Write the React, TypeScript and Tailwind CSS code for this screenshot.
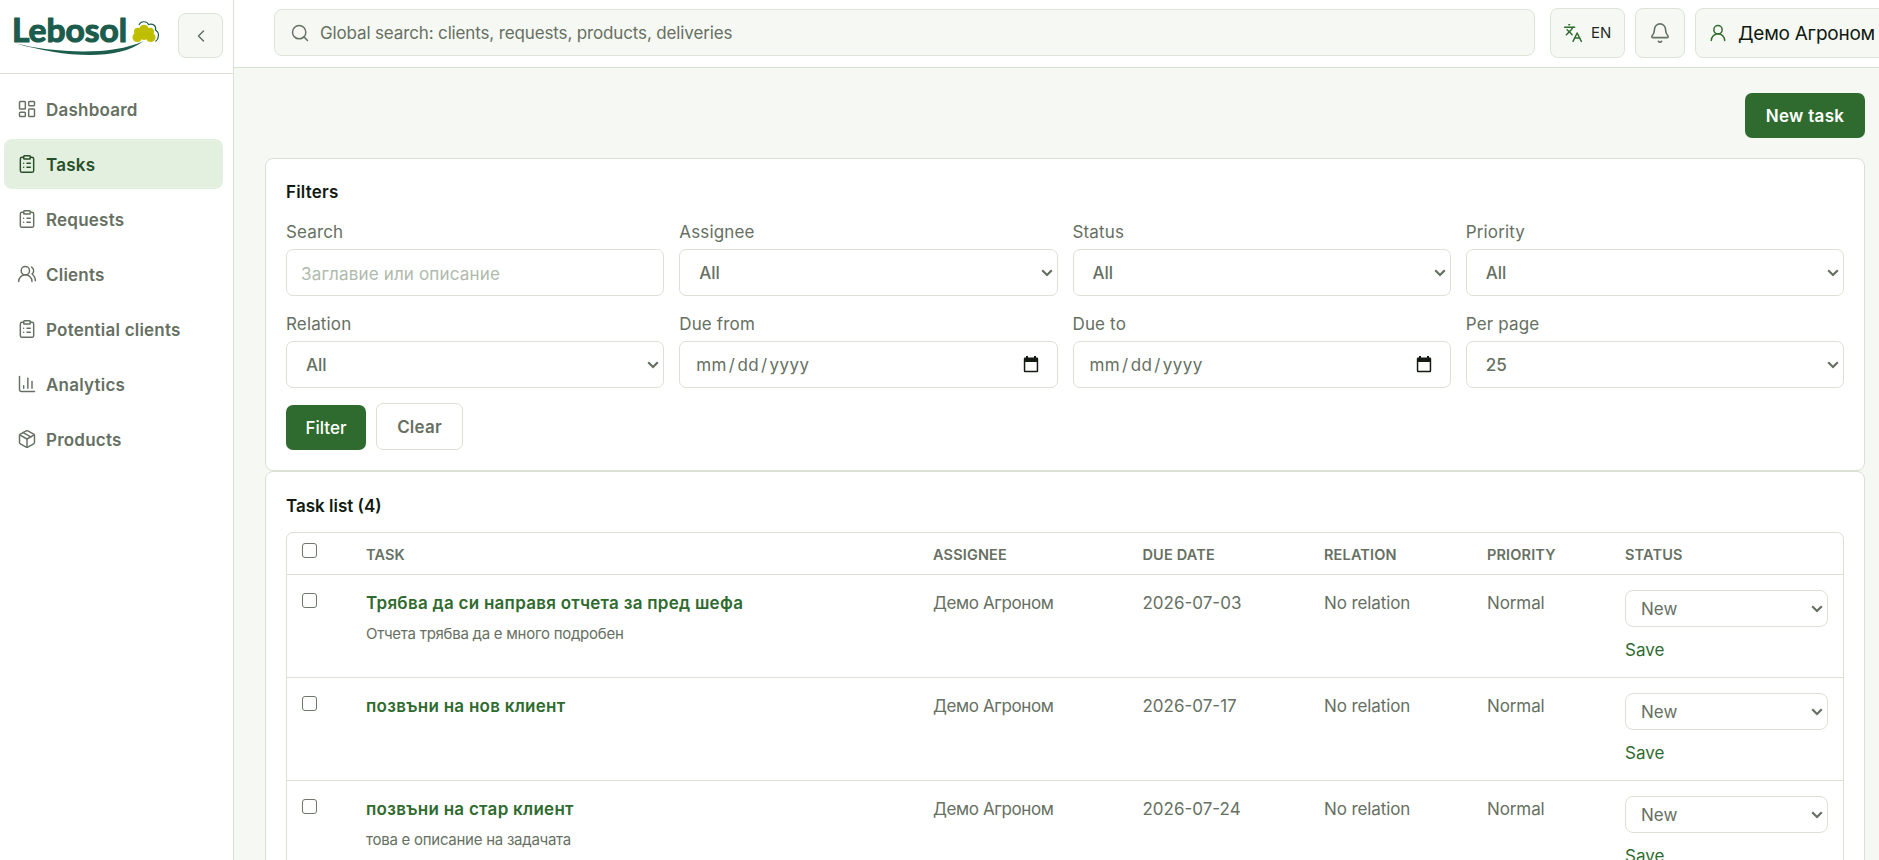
import type { ReactNode } from 'react'
import { useState } from 'react'
import {
  Bell,
  ChartColumn,
  ChevronLeft,
  ClipboardList,
  Languages,
  LayoutDashboard,
  Package,
  Search,
  UserRound,
  UsersRound,
} from 'lucide-react'
import type { LucideIcon } from 'lucide-react'

interface NavItem {
  label: string
  icon: LucideIcon
}

interface Task {
  id: number
  title: string
  description?: string
  assignee: string
  dueDate: string
  relation: string
  priority: string
}

const navItems: NavItem[] = [
  { label: 'Dashboard', icon: LayoutDashboard },
  { label: 'Tasks', icon: ClipboardList },
  { label: 'Requests', icon: ClipboardList },
  { label: 'Clients', icon: UsersRound },
  { label: 'Potential clients', icon: ClipboardList },
  { label: 'Analytics', icon: ChartColumn },
  { label: 'Products', icon: Package },
]

const tasks: Task[] = [
  {
    id: 1,
    title: 'Трябва да си направя отчета за пред шефа',
    description: 'Отчета трябва да е много подробен',
    assignee: 'Демо Агроном',
    dueDate: '2026-07-03',
    relation: 'No relation',
    priority: 'Normal',
  },
  {
    id: 2,
    title: 'позвъни на нов клиент',
    assignee: 'Демо Агроном',
    dueDate: '2026-07-17',
    relation: 'No relation',
    priority: 'Normal',
  },
  {
    id: 3,
    title: 'позвъни на стар клиент',
    description: 'това е описание на задачата',
    assignee: 'Демо Агроном',
    dueDate: '2026-07-24',
    relation: 'No relation',
    priority: 'Normal',
  },
]

function Logo() {
  return (
    <svg width="154" height="58" viewBox="0 -13 154 58" className="shrink-0">
      <text
        x="2"
        y="28.9"
        textLength="115"
        lengthAdjust="spacingAndGlyphs"
        fontSize="33"
        fontWeight="700"
        fill="#1c5c4c"
        stroke="#1c5c4c"
        strokeWidth="1.2"
        strokeLinejoin="round"
        className="font-[Lato,sans-serif]"
      >
        Lebosol
      </text>
      <path d="M6 30.500C40 39 100 44 133.500 28C106 49.500 50 43 6 30.500Z" fill="#1c5c4c" />
      <g fill="#bfbf00">
        <circle cx="134" cy="16.500" r="4.800" />
        <circle cx="127.800" cy="18.500" r="3.800" />
        <circle cx="140.200" cy="18.500" r="3.800" />
        <circle cx="127.300" cy="24.300" r="4.800" />
        <circle cx="140.700" cy="24.300" r="4.800" />
        <circle cx="134" cy="22" r="5" />
      </g>
      <path
        d="M129 12C130.500 8 136.500 7.500 138.500 11.500C142.500 10 146.500 12.500 145.500 17C149.500 19.500 149.500 25 145.500 28.500"
        fill="none"
        stroke="#1c5c4c"
        strokeWidth="1.200"
      />
    </svg>
  )
}

function Chevron() {
  return (
    <svg width="12" height="8" viewBox="0 0 12 8" className="pointer-events-none absolute right-[5px] top-1/2 -translate-y-1/2">
      <path d="M1.2 1.2 6 6 10.8 1.2" fill="none" stroke="#667062" strokeWidth="2.2" />
    </svg>
  )
}

function Field({ label, children }: { label: string; children: ReactNode }) {
  return (
    <div className="min-w-0">
      <label className="mb-[5px] block h-[25px] pt-px leading-[25px] tracking-[0.15px]">{label}</label>
      {children}
    </div>
  )
}

function SelectField({ label, value }: { label: string; value: string }) {
  return (
    <Field label={label}>
      <div className="relative">
        <select className="block h-[47px] w-full appearance-none rounded-[7px] border border-[#dce1d7] bg-white pl-[19px] pt-[2px] font-medium outline-none">
          <option>{value}</option>
        </select>
        <Chevron />
      </div>
    </Field>
  )
}

function DateField({ label }: { label: string }) {
  return (
    <Field label={label}>
      <div className="flex h-[47px] items-center justify-between rounded-[7px] border border-[#dce1d7] bg-white pl-4 pr-[18px]">
        <span className="flex gap-[2px] pt-[2px] tracking-[0.4px]">
          <span>mm</span>
          <span>/</span>
          <span>dd</span>
          <span>/</span>
          <span>yyyy</span>
        </span>
        <svg width="16" height="17" viewBox="0 0 16 17" fill="#141b12">
          <path d="M3 0h2v1.5h6V0h2v1.5h1A1.2 1.2 0 0 1 15.2 2.7V15A1.2 1.2 0 0 1 14 16.2H2A1.2 1.2 0 0 1 .8 15V2.7A1.2 1.2 0 0 1 2 1.5h1zM2.3 6v8.7h11.4V6z" />
        </svg>
      </div>
    </Field>
  )
}

function Checkbox() {
  return (
    <input
      type="checkbox"
      className="block size-[15px] appearance-none rounded-[3px] border border-[#6c7868] bg-white"
    />
  )
}

export default function App() {
  const [active, setActive] = useState('Tasks')

  return (
    <div className="flex h-[860px] w-full overflow-hidden bg-[#f6f8f4] font-[Inter,'Noto_Sans',sans-serif] text-[17px] text-[#667062]">
      <aside className="w-[234px] shrink-0 border-r border-[#dbe1d6] bg-white">
        <div className="flex h-[74px] items-start gap-[14px] border-b border-[#dbe1d6] pl-[10px]">
          <Logo />
          <button className="mt-[13px] flex size-[45px] shrink-0 items-center justify-center rounded-[8px] border border-[#dbe4d6] bg-[#f6f8f4]">
            <ChevronLeft size={20} strokeWidth={1.75} />
          </button>
        </div>
        <nav className="flex flex-col gap-[5px] pl-1 pr-[10px] pt-[10px]">
          {navItems.map(({ label, icon: Icon }) => (
            <button
              key={label}
              onClick={() => setActive(label)}
              className={`flex h-[50px] items-center gap-[9px] rounded-[8px] pl-[13px] font-semibold tracking-[0.22px] ${
                active === label ? 'bg-[#e4f0df] text-[#27502a]' : ''
              }`}
            >
              <Icon size={20} strokeWidth={1.75} />
              <span className="pt-[3px]">{label}</span>
            </button>
          ))}
        </nav>
      </aside>

      <div className="flex min-w-0 flex-1 flex-col overflow-hidden">
        <header className="flex h-[68px] shrink-0 items-start border-b border-[#d8e2d4] bg-white pl-10 pt-2">
          <div className="mt-px flex h-[47px] w-[1261px] shrink-0 items-center gap-[10px] rounded-[8px] border border-[#dbe4d6] bg-[#f6f8f4] pl-[15px]">
            <Search size={20} strokeWidth={1.75} />
            <span className="pt-[3px] tracking-[-0.14px]">Global search: clients, requests, products, deliveries</span>
          </div>
          <button className="ml-[15px] flex h-[50px] w-[75px] shrink-0 items-center gap-2 rounded-[8px] border border-[#dbe4d6] bg-[#f6f8f4] pl-3 text-[15px] text-[#1f2b1e]">
            <Languages size={20} strokeWidth={1.75} className="text-[#2f6b2f]" />
            EN
          </button>
          <button className="ml-[10px] flex size-[50px] shrink-0 items-center justify-center rounded-[8px] border border-[#dbe4d6] bg-[#f6f8f4] pr-px">
            <Bell size={22} strokeWidth={1.75} />
          </button>
          <button className="ml-[10px] flex h-[50px] w-[220px] shrink-0 items-center gap-[10px] rounded-[8px] border border-[#dbe4d6] bg-[#f6f8f4] pl-3 text-[19px] text-[#111a11]">
            <UserRound size={20} strokeWidth={1.75} className="text-[#2f6b2f]" />
            <span className="whitespace-nowrap pt-[2px] tracking-[-0.25px]">Демо Агроном</span>
          </button>
        </header>

        <main className="pl-[31px] pr-[14px] pt-[25px]">
          <div className="mb-5 flex justify-end">
            <button className="h-[45px] w-[120px] rounded-[7px] bg-[#2f6b2f] pt-[2px] font-semibold tracking-[0.3px] text-white">
              New task
            </button>
          </div>

          <section className="h-[313px] rounded-[8px] border border-[#dae1d4] bg-white px-5 pt-5">
            <h2 className="h-[26px] font-semibold leading-[26px] tracking-[0.2px] text-[#111a11]">Filters</h2>
            <div className="mt-[14px] grid grid-cols-4 gap-[15px]">
              <Field label="Search">
                <input
                  placeholder="Заглавие или описание"
                  className="block h-[47px] w-full rounded-[7px] border border-[#dce1d7] bg-white pl-[14px] pt-[2px] tracking-[0.17px] outline-none placeholder:text-[#b0baac]"
                />
              </Field>
              <SelectField label="Assignee" value="All" />
              <SelectField label="Status" value="All" />
              <SelectField label="Priority" value="All" />
              <SelectField label="Relation" value="All" />
              <DateField label="Due from" />
              <DateField label="Due to" />
              <SelectField label="Per page" value="25" />
            </div>
            <div className="mt-[15px] flex items-end gap-[10px]">
              <button className="h-[45px] w-20 rounded-[7px] bg-[#2f6b2f] pt-[2px] font-medium text-white">Filter</button>
              <button className="h-[47px] w-[87px] rounded-[7px] border border-[#dae1d4] bg-white pt-[2px] font-semibold tracking-[0.2px]">
                Clear
              </button>
            </div>
          </section>

          <section className="h-[500px] rounded-[8px] border border-[#dae1d4] bg-white px-5 pt-5">
            <h2 className="h-[26px] pt-px font-semibold leading-[26px] text-[#111a11]">Task list (4)</h2>
            <div className="mt-[14px] rounded-[7px] border border-[#dae1d4]">
              <div className="grid h-[42px] grid-cols-[64px_567px_209.5px_181.5px_163px_138px_1fr] border-b border-[#dae1d4] pl-[15px] text-[14.5px] font-semibold leading-[43px] tracking-[0.15px]">
                <span className="pt-[10px]">
                  <Checkbox />
                </span>
                <span>TASK</span>
                <span>ASSIGNEE</span>
                <span>DUE DATE</span>
                <span>RELATION</span>
                <span>PRIORITY</span>
                <span>STATUS</span>
              </div>
              {tasks.map((task) => (
                <div
                  key={task.id}
                  className="grid h-[103px] grid-cols-[64px_567px_209.5px_181.5px_163px_138px_1fr] border-b border-[#dae1d4] px-[15px] pt-[15px] leading-[27px]"
                >
                  <div className="pt-[3px]">
                    <Checkbox />
                  </div>
                  <div>
                    <p className="font-semibold tracking-[0.27px] text-[#2f6b2f]">{task.title}</p>
                    {task.description && (
                      <p className="mt-1 text-[15px] leading-[25px] tracking-[-0.26px]">{task.description}</p>
                    )}
                  </div>
                  <span className="tracking-[-0.4px]">{task.assignee}</span>
                  <span>{task.dueDate}</span>
                  <span className="tracking-[-0.1px]">{task.relation}</span>
                  <span className="tracking-[-0.1px]">{task.priority}</span>
                  <div>
                    <div className="relative">
                      <select className="block h-[37px] w-full appearance-none rounded-[8px] border border-[#dce1d7] bg-white pl-[15px] pt-px outline-none">
                        <option>New</option>
                      </select>
                      <Chevron />
                    </div>
                    <button className="mt-[10px] block leading-[27px] text-[#2f6b2f]">Save</button>
                  </div>
                </div>
              ))}
            </div>
          </section>
        </main>
      </div>
    </div>
  )
}
